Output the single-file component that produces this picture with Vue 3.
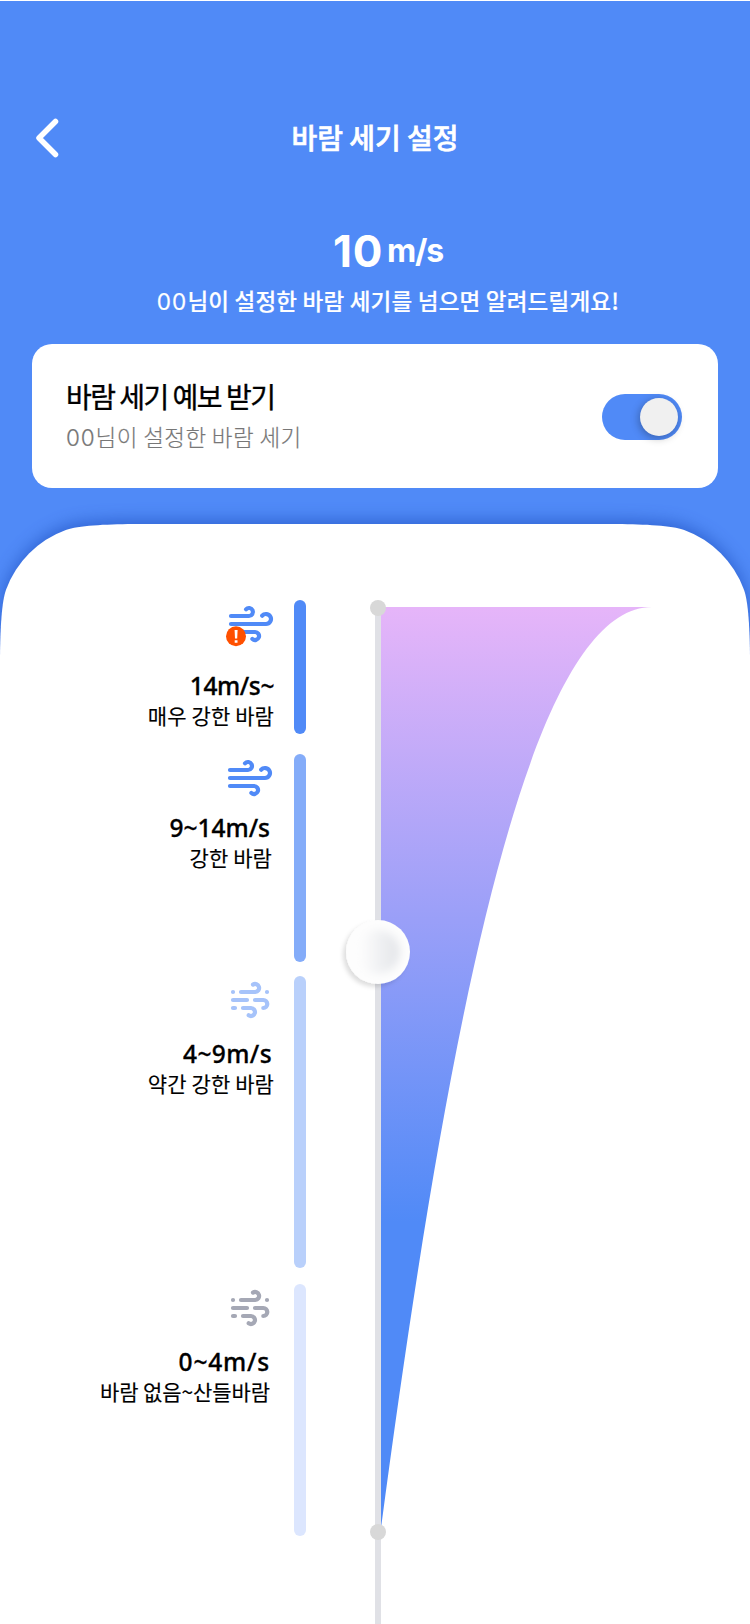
<script setup>
import { ref } from 'vue'

const speed = ref(10)
const enabled = ref(true)

const levels = [
  { key: 'severe', range: '14m/s~', name: '매우 강한 바람', icon: 'wind', alert: true },
  { key: 'strong', range: '9~14m/s', name: '강한 바람', icon: 'wind', alert: false },
  { key: 'moderate', range: '4~9m/s', name: '약간 강한 바람', icon: 'breeze', alert: false },
  { key: 'calm', range: '0~4m/s', name: '바람 없음~산들바람', icon: 'breeze', alert: false },
]
</script>

<template>
  <main class="screen">
    <header class="bar">
      <svg class="back" width="24" height="40" viewBox="0 0 24 40">
        <path d="M20.5 3.5 L4 20 L20.5 36.5" />
      </svg>
      <h1>바람 세기 설정</h1>
    </header>

    <section class="summary">
      <p class="speed"><strong>{{ speed }}</strong><span>m/s</span></p>
      <p class="hint"><span class="user">00</span>님이 설정한 바람 세기를 넘으면 알려드릴게요!</p>
    </section>

    <section class="card">
      <div class="card-text">
        <h2>바람 세기 예보 받기</h2>
        <p><span class="user">00</span>님이 설정한 바람 세기</p>
      </div>
      <button class="toggle" :class="{ on: enabled }" @click="enabled = !enabled"><i></i></button>
    </section>

    <section class="sheet">
      <svg class="sheet-bg" width="750" height="1100" viewBox="0 0 750 1100">
        <path
          d="M0 1150 V133 C0.3 105 1.6 78 6.03 65.8 A100 100 0 0 1 65.8 6.03 C78 1.6 105 0.3 133 0 H617 C645 0.3 672 1.6 684.2 6.03 A100 100 0 0 1 743.97 65.8 C748.4 78 749.7 105 750 133 V1150 Z"
        />
      </svg>

      <ul class="levels">
        <li v-for="l in levels" :key="l.key" :class="l.key">
          <div class="label">
            <svg v-if="l.icon === 'wind'" class="icon" width="48" height="38" viewBox="0 0 48 38">
              <path d="M4 11 H22 A4 4 0 1 0 19 4.3" />
              <path d="M4 19 H39 A5 5 0 1 0 35.2 10.7" />
              <path d="M4 27 H28 A4 4 0 1 1 25.4 34" />
              <g v-if="l.alert" class="alert">
                <circle cx="9" cy="31.3" r="10" />
                <path d="M7.6 25 H10.6 L10.2 33.6 H8 Z M7.7 35.2 H10.5 V37.8 H7.7 Z" />
              </g>
            </svg>
            <svg v-else class="icon" width="48" height="38" viewBox="0 0 48 38">
              <path d="M7 11 h.01 M15 11 H29.3 A4 4 0 1 0 27 3.6 M41 11 h.01" />
              <path d="M7 19 H21 M29 19 H37.3 A4 4 0 0 1 37.3 27" />
              <path d="M7 27 h2 M17 27 H25 A4 4 0 1 1 22.7 34.3" />
            </svg>
            <strong>{{ l.range }}</strong>
            <span>{{ l.name }}</span>
          </div>
          <i class="meter"></i>
        </li>
      </ul>

      <svg class="slider" width="360" height="1100" viewBox="330 524 360 1100">
        <defs>
          <linearGradient id="wedge" gradientUnits="userSpaceOnUse" x1="0" y1="607" x2="0" y2="1525">
            <stop offset="0" stop-color="#e6b5f9" />
            <stop offset="0.67" stop-color="#508af7" />
          </linearGradient>
          <linearGradient id="knob" x1="0" x2="1" y1="0" y2="0">
            <stop offset="0.1" stop-color="#fdfdfd" />
            <stop offset="1" stop-color="#e2e4e8" />
          </linearGradient>
          <filter id="soft" x="-50%" y="-50%" width="200%" height="200%">
            <feGaussianBlur stdDeviation="4" />
          </filter>
          <filter id="lift" x="-50%" y="-50%" width="200%" height="200%">
            <feDropShadow dx="-3" dy="3" stdDeviation="2" flood-color="#000" flood-opacity="0.13" />
          </filter>
        </defs>
        <path class="wedge" d="M381 607 H652 C526 607 446 1040 381 1528 Z" />
        <rect class="rail" x="375" y="607" width="6" height="1017" />
        <circle class="dot" cx="378" cy="608" r="8" />
        <circle class="dot" cx="378" cy="1532" r="8" />
        <circle class="knob" cx="378" cy="952" r="32" />
        <circle class="knob-face" cx="378" cy="952" r="22" />
      </svg>
    </section>
  </main>
</template>

<style>
body {
  background: #fff;
}
</style>

<style scoped>
* {
  box-sizing: border-box;
  margin: 0;
  padding: 0;
}

.screen {
  width: 750px;
  height: 1624px;
  overflow: hidden;
  border-top: 1px solid #fff;
  background: linear-gradient(#508af7, #508af7) no-repeat 0 0 / 100% 656px;
  font-family: "Noto Sans CJK KR", sans-serif;
}

.bar {
  display: grid;
  grid-template-columns: 60px 1fr 60px;
  align-items: center;
  height: 60px;
  margin-top: 107px;
}

.back {
  margin-left: 35px;
  fill: none;
  stroke: #fff;
  stroke-width: 5.5;
  stroke-linecap: round;
  stroke-linejoin: round;
}

.bar h1 {
  padding-bottom: 2px;
  text-align: center;
  color: #fff;
  font-size: 28px;
  line-height: 40px;
  font-weight: 500;
  -webkit-text-stroke: 0.6px #fff;
}

.summary {
  color: #fff;
  text-align: center;
}

.speed {
  display: flex;
  justify-content: center;
  align-items: flex-end;
  gap: 4px;
  margin-top: 55px;
  padding-left: 26px;
  height: 56px;
  font-family: Inter, sans-serif;
}

.speed strong {
  font-size: 44px;
  line-height: 56px;
  font-weight: 650;
  letter-spacing: 0.6px;
}

.speed span {
  font-size: 32px;
  line-height: 56px;
  font-weight: 650;
  letter-spacing: -1.2px;
}

.hint {
  height: 34px;
  margin-top: 4px;
  padding-left: 26px;
  font-size: 22.5px;
  line-height: 34px;
  font-weight: 500;
  letter-spacing: 0.22px;
  white-space: nowrap;
  -webkit-text-stroke: 0.2px #fff;
}

.user {
  font-family: Inter, sans-serif;
  letter-spacing: 0.9px;
}

.hint .user {
  font-weight: 400;
  letter-spacing: 1.1px;
}

.card {
  display: flex;
  justify-content: space-between;
  align-items: center;
  width: 686px;
  height: 144px;
  margin: 27px 32px 0;
  padding: 0 36px 0 34px;
  border-radius: 20px;
  background: #fff;
}

.card h2 {
  font-size: 28px;
  line-height: 40px;
  font-weight: 400;
  letter-spacing: -1.5px;
  color: #000;
  -webkit-text-stroke: 0.35px #000;
}

.card p {
  height: 40px;
  font-size: 22.5px;
  line-height: 40px;
  font-weight: 300;
  letter-spacing: 0.4px;
  color: #777;
  -webkit-text-stroke: 0.2px #777;
}

.toggle {
  display: flex;
  align-items: center;
  width: 80px;
  height: 46px;
  margin-top: 2px;
  padding: 0 4px;
  border: 0;
  border-radius: 23px;
  background: #ccc;
}

.toggle.on {
  justify-content: flex-end;
  background: #508af7;
}

.toggle i {
  width: 38px;
  height: 38px;
  border-radius: 50%;
  background: #f0f0f0;
  box-shadow: -1px 2px 8px rgba(0, 0, 0, 0.3);
}

.sheet {
  position: relative;
  display: grid;
  grid-template-columns: 330px 360px;
  height: 1100px;
  margin-top: 36px;
}

.sheet-bg {
  position: absolute;
  left: 0;
  top: 0;
  overflow: visible;
  fill: #fff;
  filter: drop-shadow(0 -4px 8px rgba(0, 45, 160, 0.4));
}

.levels {
  position: relative;
  width: 306px;
  padding-top: 76px;
  list-style: none;
}

.levels li {
  display: flex;
}

.label {
  display: flex;
  flex: 1;
  flex-direction: column;
  align-items: flex-end;
  color: #000;
  white-space: nowrap;
}

.label strong {
  font-family: "Noto Sans", sans-serif;
  font-size: 24.5px;
  line-height: 32px;
  font-weight: 500;
  -webkit-text-stroke: 0.3px #000;
}

.label span {
  font-size: 21px;
  line-height: 26px;
  font-weight: 400;
  letter-spacing: 0.1px;
  -webkit-text-stroke: 0.15px #000;
}

.meter {
  width: 12px;
  border-radius: 6px;
}

.icon {
  overflow: visible;
  fill: none;
  stroke: currentColor;
  stroke-width: 4.2;
  stroke-linecap: round;
}

.alert {
  fill: #ff5000;
  stroke: none;
}

.alert path {
  fill: #fff;
}

.severe { height: 134px; margin-bottom: 20px; }
.severe .label { padding: 5px 20px 0 0; }
.severe .icon { color: #508af7; margin-right: -1px; }
.severe .label strong { margin-top: 27px; letter-spacing: -0.4px; }
.severe .meter { background: #508af7; }

.strong { height: 208px; margin-bottom: 14px; }
.strong .label { padding: 5px 22px 0 0; }
.strong .icon { color: #508af7; margin-right: -2px; }
.strong .label strong { margin-top: 15px; margin-right: 2px; }
.strong .meter { background: #84acf9; }

.moderate { height: 292px; margin-bottom: 16px; }
.moderate .label { padding: 5px 20px 0 0; }
.moderate .icon { color: #a6c3fa; }
.moderate .label strong { margin-top: 19px; margin-right: 2px; letter-spacing: 0.4px; }
.moderate .meter { background: #b9d0fb; }

.calm { height: 252px; }
.calm .label { padding: 5px 24px 0 0; }
.calm .icon { color: #a5a8b5; margin-right: -4px; }
.calm .label strong { margin-top: 19px; letter-spacing: 0.8px; }
.calm .label span { letter-spacing: -0.1px; }
.calm .meter { background: #dce6fe; }

.slider {
  position: relative;
}

.wedge { fill: url(#wedge); }
.rail { fill: #e0e1e6; }
.dot { fill: #d8d8d8; }
.knob { fill: #fdfdfd; filter: url(#lift); }
.knob-face { fill: url(#knob); filter: url(#soft); }
</style>
